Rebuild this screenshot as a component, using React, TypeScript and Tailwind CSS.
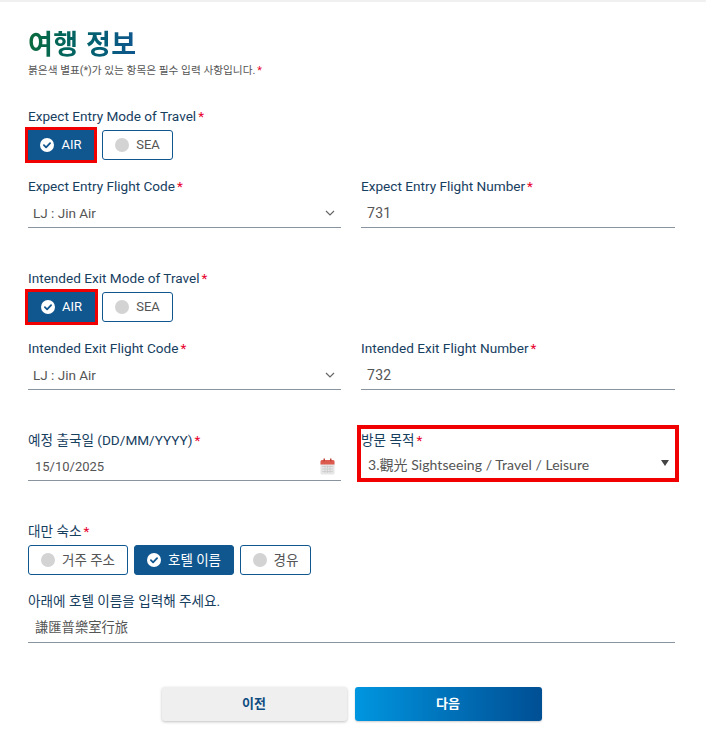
import React from "react";

function Star() {
  return <span className="text-[#e8002d] ml-[2px]">*</span>;
}

function Label({ text, star = true }: { text: string; star?: boolean }) {
  return (
    <div className="h-[18px] text-[13.6px] leading-[18px] text-[#17405f] whitespace-nowrap">
      {text}
      {star && <Star />}
    </div>
  );
}

function Check() {
  return (
    <svg width="14" height="14" viewBox="0 0 14 14" className="shrink-0">
      <circle cx="7" cy="7" r="7" fill="#fff" />
      <path d="M3.9 7.2 6.1 9.3 10.1 5.1" fill="none" stroke="#10568f" strokeWidth="1.8" strokeLinecap="round" strokeLinejoin="round" />
    </svg>
  );
}

function Choice({ text, on, w, flag, ko }: { text: string; on?: boolean; w: string; flag?: boolean; ko?: boolean }) {
  return (
    <div
      className={`${w} h-[30px] flex items-center justify-center gap-[7px] rounded-[3px] border border-[#10568f] ${ko ? "text-[13.5px]" : "text-[13px]"} ${
        on ? "bg-[#10568f] text-white" : "bg-white text-[#555]"
      } ${flag ? "outline-[3px] outline-[#f00000] rounded-none" : ""}`}
    >
      {on ? <Check /> : <span className="w-[14px] h-[14px] rounded-full bg-[#d3d3d3] shrink-0" />}
      <span>{text}</span>
    </div>
  );
}

function Chevron() {
  return (
    <svg width="10" height="6" viewBox="0 0 10 6" className="mr-[6px]">
      <path d="M1 1l4 4 4-4" fill="none" stroke="#666" strokeWidth="1.2" />
    </svg>
  );
}

function Field({ label, value, right, valueClass }: { label: string; value: string; right?: React.ReactNode; valueClass: string }) {
  return (
    <div className="min-w-0">
      <Label text={label} />
      <div className={`mt-[4px] flex items-center justify-between border-b border-[#8a949e] text-[#555] ${valueClass}`}>
        <span>{value}</span>
        {right}
      </div>
    </div>
  );
}

function Calendar() {
  return (
    <svg width="15" height="17" viewBox="0 0 15 17" className="mr-[6px]">
      <rect x="0.5" y="2" width="14" height="14.5" rx="1.5" fill="#e6e6e6" />
      <path d="M0.5 3.5a1.5 1.5 0 0 1 1.5-1.5h11a1.5 1.5 0 0 1 1.5 1.5V6.500h-14z" fill="#dc5a4e" />
      <rect x="3.500" y="0.500" width="1.500" height="3" fill="#c0463c" />
      <rect x="10" y="0.500" width="1.500" height="3" fill="#c0463c" />
      <path d="M2 8.500h11M2 11h11M2 13.500h11M5 7.500v7.500M7.500 7.500v7.500M10 7.500v7.500" stroke="#c8c8c8" strokeWidth="0.7" />
    </svg>
  );
}

export default function App() {
  return (
    <div
      className="w-[706px] h-[730px] bg-white overflow-hidden border-t-2 border-[#f0f0f0]"
      style={{ fontFamily: "Roboto, 'Noto Sans CJK KR', sans-serif" }}
    >
      <div className="w-[647px] ml-[28px]">
        <h1 className="mt-[26px] h-[34px] text-[27px] leading-[34px] font-bold tracking-[0.5px] w-fit bg-gradient-to-r from-[#0b6a3c] to-[#10568f] bg-clip-text text-transparent">
          여행 정보
        </h1>
        <p className="h-[16px] mt-[1px] text-[10.7px] leading-[16px] text-[#555]">
          붉은색 별표(*)가 있는 항목은 필수 입력 사항입니다.<Star />
        </p>

        <div className="mt-[28px]">
          <Label text="Expect Entry Mode of Travel" />
        </div>
        <div className="flex gap-[8px] mt-[5px]">
          <Choice text="AIR" on flag w="w-[66px]" />
          <Choice text="SEA" w="w-[71px]" />
        </div>
        <div className="grid grid-cols-[313px_314px] gap-[20px] mt-[17px]">
          <Field label="Expect Entry Flight Code" value="LJ : Jin Air" right={<Chevron />} valueClass="h-[29px] pl-[5px] text-[13.5px]" />
          <Field label="Expect Entry Flight Number" value="731" valueClass="h-[29px] pl-[6px] text-[14px] tracking-[0.3px]" />
        </div>

        <div className="mt-[41px]">
          <Label text="Intended Exit Mode of Travel" />
        </div>
        <div className="flex gap-[7px] mt-[5px]">
          <Choice text="AIR" on flag w="w-[67px]" />
          <Choice text="SEA" w="w-[71px]" />
        </div>
        <div className="grid grid-cols-[313px_314px] gap-[20px] mt-[17px]">
          <Field label="Intended Exit Flight Code" value="LJ : Jin Air" right={<Chevron />} valueClass="h-[29px] pl-[5px] text-[13.5px]" />
          <Field label="Intended Exit Flight Number" value="732" valueClass="h-[29px] pl-[6px] text-[14px] tracking-[0.3px]" />
        </div>

        <div className="grid grid-cols-[313px_314px] gap-[20px] mt-[41px]">
          <Field label="예정 출국일 (DD/MM/YYYY)" value="15/10/2025" right={<Calendar />} valueClass="h-[28px] pl-[7px] text-[13px]" />
          <div className="min-w-0 -mt-[2px] h-[49px] pt-[2px] outline-4 outline-[#f00000]">
            <Label text="방문 목적" />
            <div
              className="h-[29px] mt-[1px] pl-[7px] flex items-center justify-between text-[14px] tracking-[0.05px] text-[#555]"
              style={{ fontFamily: "Lato, 'Noto Sans CJK TC', sans-serif" }}
            >
              <span>3.觀光 Sightseeing / Travel / Leisure</span>
              <span className="mr-[6px] -mt-[4px] w-0 h-0 border-x-[4px] border-x-transparent border-t-[6px] border-t-[#444]" />
            </div>
          </div>
        </div>

        <div className="mt-[41px]">
          <Label text="대만 숙소" />
        </div>
        <div className="flex gap-[6px] mt-[5px]">
          <Choice ko text="거주 주소" w="w-[100px]" />
          <Choice ko text="호텔 이름" on w="w-[100px]" />
          <Choice ko text="경유" w="w-[71px]" />
        </div>
        <div className="mt-[17px]">
          <Label text="아래에 호텔 이름을 입력해 주세요." star={false} />
          <div
            className="h-[32px] mt-[1px] pl-[7px] flex items-center border-b border-[#8a949e] text-[13.3px] text-[#555]"
            style={{ fontFamily: "'Noto Sans CJK TC', sans-serif" }}
          >
            謙匯普樂室行旅
          </div>
        </div>

        <div className="flex justify-center gap-[8px] mt-[44px]">
          <button className="w-[185px] h-[34px] rounded-[3px] bg-[#efefef] text-[13px] font-bold text-[#0f4c81] shadow-[0_1px_3px_rgba(0,0,0,0.25)]">
            이전
          </button>
          <button className="w-[187px] h-[34px] rounded-[3px] bg-gradient-to-r from-[#0096e0] to-[#004f94] text-[13px] font-bold text-white shadow-[0_1px_2px_rgba(0,0,0,0.2)]">
            다음
          </button>
        </div>
      </div>
    </div>
  );
}
